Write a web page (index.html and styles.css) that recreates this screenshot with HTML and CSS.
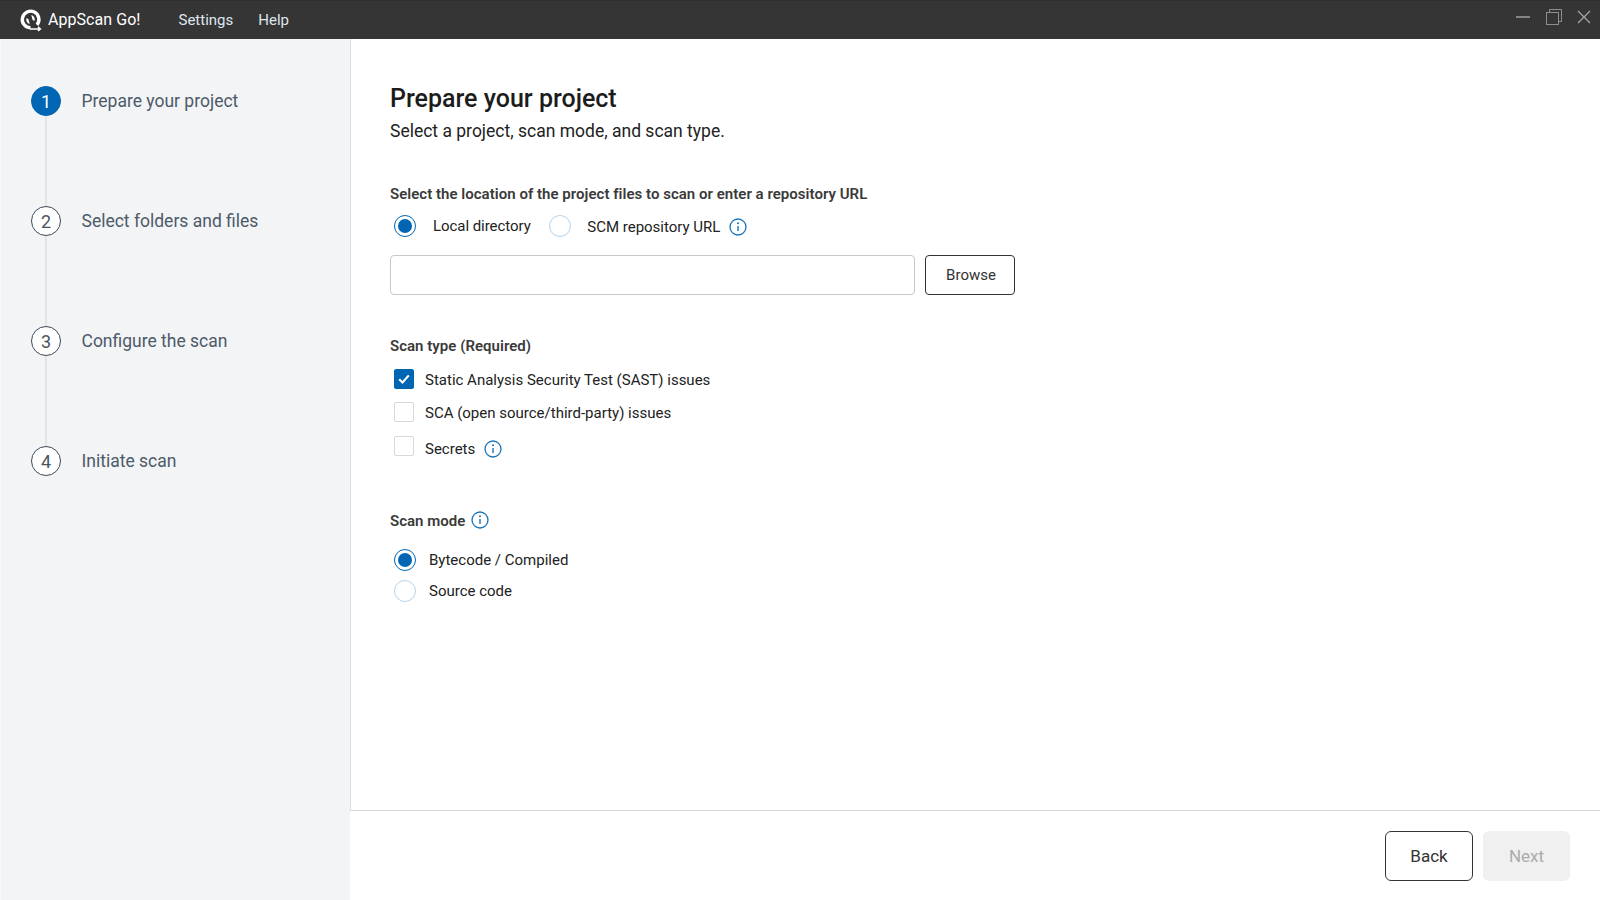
FILE: index.html
```html
<!DOCTYPE html>
<html lang="en">
<head>
<meta charset="utf-8">
<title>AppScan Go!</title>
<link rel="stylesheet" href="styles.css">
</head>
<body>
<header class="titlebar">
  <svg class="logo" width="24" height="24" viewBox="0 0 24 24" fill="none">
    <path d="M12.5 19.8A8.3 8.3 0 1 1 19 16.8" stroke="#fff" stroke-width="3.4" fill="none"/>
    <path d="M12 20.9h10M20 18.8l2.4 2.1-2.4 2.1" stroke="#fff" stroke-width="1.5" fill="none"/>
    <path d="M13.3 7a4.6 4.6 0 0 1 3.2 6l-2-1.2zM11.7 16a4.6 4.6 0 0 1-3.2-6l2 1.2z" fill="#fff"/>
  </svg>
  <span class="brand">AppScan Go!</span>
  <nav class="menu"><span class="menu-item">Settings</span><span class="menu-item">Help</span></nav>
  <div class="winctl">
    <svg width="14" height="14" viewBox="0 0 14 14"><path d="M0 7h14" stroke="#a8a8a8" stroke-width="1.4"/></svg>
    <svg width="16" height="16" viewBox="0 0 16 16" fill="none"><rect x="0.5" y="3.5" width="12" height="12" stroke="#8e8e8e"/><path d="M3.5 3V0.5h12v12H13" stroke="#8e8e8e"/></svg>
    <svg width="14" height="14" viewBox="0 0 14 14"><path d="M1 1l12 12M13 1L1 13" stroke="#a8a8a8" stroke-width="1.2"/></svg>
  </div>
</header>
<div class="body">
  <aside class="sidebar">
    <div class="step active"><span class="num">1</span><span class="step-label">Prepare your project</span></div>
    <div class="step"><span class="num">2</span><span class="step-label">Select folders and files</span></div>
    <div class="step"><span class="num">3</span><span class="step-label">Configure the scan</span></div>
    <div class="step last"><span class="num">4</span><span class="step-label">Initiate scan</span></div>
  </aside>
  <main class="main">
    <div class="content">
      <h1 class="title">Prepare your project</h1>
      <p class="subtitle">Select a project, scan mode, and scan type.</p>

      <div class="label loc-label">Select the location of the project files to scan or enter a repository URL</div>
      <div class="radio-row">
        <span class="radio on"></span><span class="opt opt-local">Local directory</span>
        <span class="radio"></span><span class="opt opt-scm">SCM repository URL</span>
        <svg class="info info-scm" width="18" height="18" viewBox="0 0 18 18" fill="none"><circle cx="9" cy="9" r="8" stroke="#1a73b8" stroke-width="1.3"/><path d="M9 8v5" stroke="#1a73b8" stroke-width="1.4"/><circle cx="9" cy="5.2" r="1" fill="#1a73b8"/></svg>
      </div>
      <div class="path-row">
        <div class="input"></div>
        <div class="browse">Browse</div>
      </div>

      <div class="label type-label">Scan type (Required)</div>
      <div class="check-row first"><span class="check on"><svg width="12" height="10" viewBox="0 0 12 10" fill="none"><path d="M1.2 5.2l3.3 3.2 6.3-7" stroke="#fff" stroke-width="2.1"/></svg></span><span class="opt">Static Analysis Security Test (SAST) issues</span></div>
      <div class="check-row second"><span class="check"></span><span class="opt">SCA (open source/third-party) issues</span></div>
      <div class="check-row third"><span class="check"></span><span class="opt">Secrets</span>
        <svg class="info info-sec" width="18" height="18" viewBox="0 0 18 18" fill="none"><circle cx="9" cy="9" r="8" stroke="#1a73b8" stroke-width="1.3"/><path d="M9 8v5" stroke="#1a73b8" stroke-width="1.4"/><circle cx="9" cy="5.2" r="1" fill="#1a73b8"/></svg>
      </div>

      <div class="label mode-label">Scan mode
        <svg class="info info-mode" width="18" height="18" viewBox="0 0 18 18" fill="none"><circle cx="9" cy="9" r="8" stroke="#1a73b8" stroke-width="1.3"/><path d="M9 8v5" stroke="#1a73b8" stroke-width="1.4"/><circle cx="9" cy="5.2" r="1" fill="#1a73b8"/></svg>
      </div>
      <div class="mode-row first"><span class="radio on"></span><span class="opt">Bytecode / Compiled</span></div>
      <div class="mode-row"><span class="radio"></span><span class="opt">Source code</span></div>
    </div>
    <footer class="footer">
      <div class="btn back">Back</div>
      <div class="btn next">Next</div>
    </footer>
  </main>
</div>
</body>
</html>
```
FILE: styles.css
```css
* { box-sizing: border-box; }
html, body { margin: 0; height: 100%; }
body {
  width: 1600px; height: 900px; overflow: hidden;
  font-family: Roboto, "Liberation Sans", sans-serif;
  display: flex; flex-direction: column; background: #fff; color: #222;
}
.titlebar {
  height: 39px; flex: none; background: #353535; color: #fff;
  display: flex; align-items: center; padding-left: 18px;
  border-top: 1px solid #2e2e2e;
}
.logo { flex: none; margin-top: -1px; }
.brand { margin-left: 6px; font-size: 16px; letter-spacing: 0.05px; margin-top: -2px; }
.menu { display: flex; margin-left: 38px; gap: 25px; }
.menu-item { font-size: 15px; color: #dfe6ee; }
.winctl { margin-left: auto; display: flex; align-items: center; gap: 15px; padding-right: 9px; margin-top: -6px; }
.winctl svg:first-child { margin-right: 1px; }
.body { flex: 1; display: flex; min-height: 0; }
.sidebar {
  width: 350px; flex: none; background: #f2f4f6; border-left: 1px solid #fafafa;
  padding: 47px 0 0 30px;
}
.step {
  height: 120px; display: flex; align-items: flex-start; position: relative;
}
.step::after {
  content: ""; position: absolute; left: 14px; top: 30px; width: 2px; height: 90px; background: #e2e4e8;
}
.step.last::after { display: none; }
.num {
  width: 30px; height: 30px; border-radius: 50%; border: 1px solid #3a4a5a; background: #fff;
  display: flex; align-items: center; justify-content: center;
  font-size: 18px; color: #4a5560; flex: none;
}
.step.active .num { background: #0066b3; border-color: #0066b3; color: #fff; }
.step-label { margin-left: 20.5px; font-size: 17.5px; line-height: 30px; color: #4d5a68; }
.main { flex: 1; display: flex; flex-direction: column; min-width: 0; }
.content { flex: 1; padding: 43px 0 0 39px; border-left: 1px solid #dcdee2; }
.title { margin: 0; font-size: 25px; font-weight: 500; line-height: 34px; color: #1c1c1c; }
.subtitle { margin: 0; font-size: 17.5px; line-height: 30px; color: #222; }
.label { font-size: 15px; font-weight: 600; color: #3a3a3a; line-height: 20px; letter-spacing: 0.03px; }
.loc-label { margin-top: 38px; }
.radio-row { display: flex; align-items: center; margin-top: 10px; height: 24px; padding-left: 4px; }
.radio {
  width: 22px; height: 22px; border-radius: 50%; border: 1.5px solid #b5d3ea; background: #fff;
  flex: none; position: relative;
}
.radio.on { border: 1.5px solid #0066b3; }
.radio.on::after { content: ""; position: absolute; inset: 3px; border-radius: 50%; background: #0066b3; }
.opt { font-size: 15px; line-height: 20px; color: #222; }
.opt-local { margin-left: 17px; margin-right: 18px; letter-spacing: -0.05px; }
.opt-scm { margin-left: 16.5px; position: relative; top: 1px; }
.info { flex: none; }
.info-scm { margin-left: 9px; position: relative; top: 1px; }
.info-sec { margin-left: 9px; }
.info-mode { margin-left: 2px; vertical-align: -3px; }
.path-row { display: flex; margin-top: 17px; gap: 10px; }
.input { width: 525px; height: 40px; border: 1px solid #c8c8c8; border-radius: 4px; }
.browse {
  width: 90px; height: 40px; border: 1px solid #333; border-radius: 4px;
  display: flex; align-items: center; justify-content: center; font-size: 15px; color: #333;
  padding-left: 2px;
}
.type-label { margin-top: 41px; }
.check-row { display: flex; align-items: center; padding-left: 4px; height: 24px; }
.check-row.first { margin-top: 12px; }
.check-row.second { margin-top: 9px; }
.check-row.third { margin-top: 11.5px; }
.check {
  width: 20px; height: 20px; border-radius: 2px; border: 1px solid #d5d9de; background: #fff;
  flex: none; display: flex; align-items: center; justify-content: center; margin-right: 11px;
  position: relative; top: -1px;
}
.third .check { top: -3px; }
.check.on { background: #0066b3; border-color: #0066b3; }
.mode-label { margin-top: 50px; }
.mode-row { display: flex; align-items: center; padding-left: 4px; height: 24px; }
.mode-row.first { margin-top: 17px; }
.mode-row + .mode-row { margin-top: 7px; }
.mode-row .opt { margin-left: 13px; }
.footer {
  height: 90px; flex: none; border-top: 1px solid #d3d7dc;
  display: flex; justify-content: flex-end; align-items: flex-start;
  padding: 20px 30px 0 0; gap: 10px; background: #fff;
}
.btn {
  height: 50px; border-radius: 6px;
  display: flex; align-items: center; justify-content: center; font-size: 17px;
}
.back { width: 88px; border: 1px solid #333; color: #333; }
.next { width: 87px; background: #f0f0f0; color: #ababab; }
```
